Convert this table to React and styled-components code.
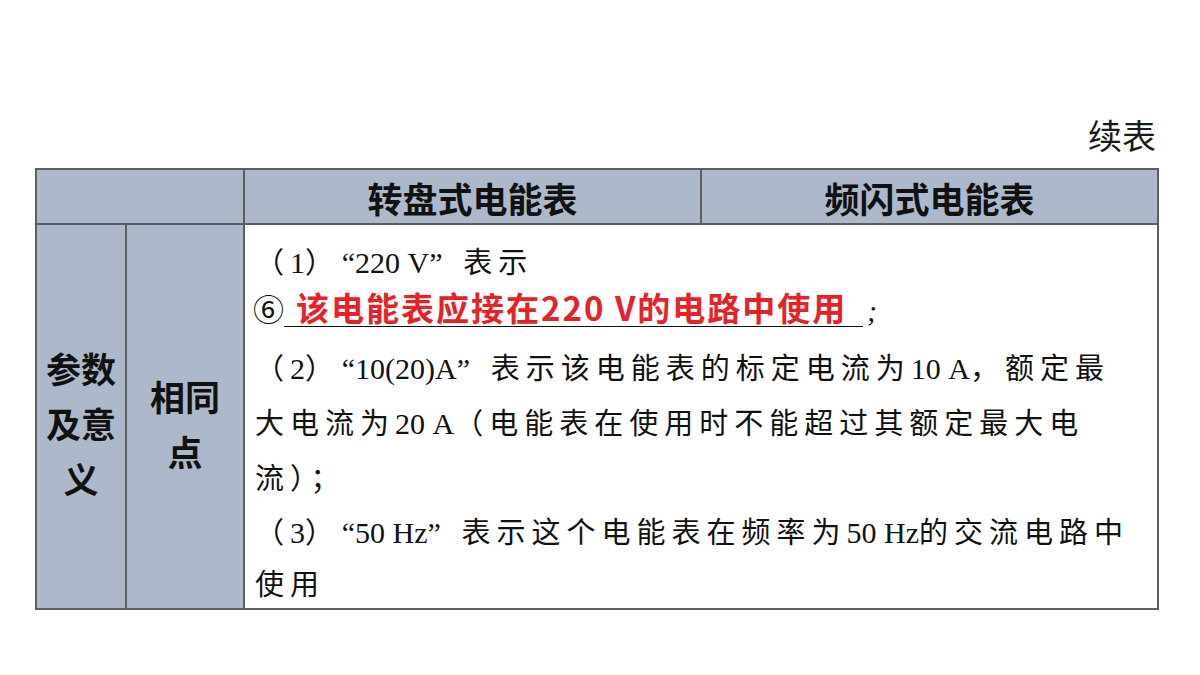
import React from "react";
import styled, { createGlobalStyle } from "styled-components";

const Global = createGlobalStyle`
  html, body { margin: 0; padding: 0; background: #ffffff; }
  body { font-family: "Noto Sans CJK SC", "Noto Sans", sans-serif; color: #111; }
`;

const Page = styled.div`
  width: 1200px;
  height: 675px;
  box-sizing: border-box;
  padding: 112px 41px 0 35px;
  background: #fff;
`;

const Caption = styled.div`
  text-align: right;
  font-family: "Noto Sans CJK SC", sans-serif;
  font-size: 34px;
  line-height: 46px;
  margin: 0 3px 10px 0;
  color: #1a1a1a;
`;

const Table = styled.div`
  display: grid;
  grid-template-columns: 88px 116px 455px 455px;
  grid-template-rows: 53px 383px;
  gap: 2px;
  width: 1124px;
  box-sizing: border-box;
  background: #5e5e5e;
  border: 2px solid #5e5e5e;
`;

const HeadCell = styled.div`
  grid-column: span ${(p) => p.$span || 1};
  background: #adb9ca;
  display: flex;
  align-items: center;
  justify-content: center;
  font-family: "Noto Sans CJK SC", sans-serif;
  font-weight: 700;
  font-size: 35px;
  color: #111;
  padding-top: 2px;
`;

const LabelCell = styled.div`
  background: #adb9ca;
  display: flex;
  align-items: center;
  justify-content: center;
  padding-top: 12px;
  box-sizing: border-box;
`;

const Label = styled.div`
  max-width: ${(p) => p.$wrap}px;
  text-align: center;
  font-family: "Noto Sans CJK SC", sans-serif;
  font-weight: 700;
  font-size: 35px;
  line-height: 55px;
  color: #111;
`;

const Content = styled.div`
  grid-column: 3 / span 2;
  background: #fff;
  padding: 10px 0 0 10px;
  box-sizing: border-box;
  font-family: "Noto Sans CJK SC", serif;
  font-size: 29px;
  letter-spacing: 6px;
  color: #111;
  overflow: visible;
`;

const Para = styled.div`
  margin-top: ${(p) => p.$gap || 0}px;
`;

const Line = styled.div`
  height: ${(p) => p.$h}px;
  line-height: ${(p) => p.$h}px;
  white-space: nowrap;
`;

const L = styled.span`
  font-family: "Liberation Serif", "Times New Roman", serif;
  font-size: 30px;
  letter-spacing: 0;
`;

const Quote = styled.span`
  display: inline-block;
  width: ${(p) => (p.$close ? 34 : 15)}px;
  text-align: ${(p) => (p.$close ? "left" : "right")};
  font-family: "Liberation Serif", "Times New Roman", serif;
  font-size: 30px;
  letter-spacing: 0;
`;

const Circled = styled.span`
  font-family: "Noto Sans CJK SC", "DejaVu Sans", sans-serif;
  font-size: 31px;
  letter-spacing: 0;
  margin-left: -2px;
`;

const Blank = styled.span`
  display: inline-block;
  line-height: 38px;
  padding: 0 16px 0 12px;
  border-bottom: 1px solid #111;
  font-family: "Noto Sans CJK SC", sans-serif;
  font-weight: 700;
  font-size: 33px;
  letter-spacing: 2px;
  color: #e52228;
`;

const Semi = styled.span`
  font-family: "Liberation Serif", serif;
  font-style: italic;
  font-size: 29px;
  letter-spacing: 0;
  margin-left: 4px;
`;

export default function App() {
  return (
    <>
      <Global />
      <Page>
        <Caption>续表</Caption>
        <Table>
          <HeadCell $span={2} />
          <HeadCell>转盘式电能表</HeadCell>
          <HeadCell>频闪式电能表</HeadCell>

          <LabelCell>
            <Label $wrap={72}>参数及意义</Label>
          </LabelCell>
          <LabelCell>
            <Label $wrap={72}>相同点</Label>
          </LabelCell>
          <Content>
            <Para>
              <Line $h={50}>
                （<L>1</L>）<Quote>“</Quote><L>220 V</L><Quote $close>”</Quote>表示
              </Line>
              <Line $h={46}>
                <Circled>⑥</Circled>
                <Blank>该电能表应接在220 V的电路中使用</Blank>
                <Semi>;</Semi>
              </Line>
            </Para>
            <Para $gap={8}>
              <Line $h={55}>
                （<L>2</L>）<Quote>“</Quote><L>10(20)A</L><Quote $close>”</Quote>表示该电能表的标定电流为<L>10 A</L>，额定最
              </Line>
              <Line $h={55}>
                大电流为<L>20 A</L>（电能表在使用时不能超过其额定最大电
              </Line>
              <Line $h={55}>流）；</Line>
            </Para>
            <Para>
              <Line $h={52}>
                （<L>3</L>）<Quote>“</Quote><L>50 Hz</L><Quote $close>”</Quote>表示这个电能表在频率为<L>50 Hz</L>的交流电路中
              </Line>
              <Line $h={52}>使用</Line>
            </Para>
          </Content>
        </Table>
      </Page>
    </>
  );
}
